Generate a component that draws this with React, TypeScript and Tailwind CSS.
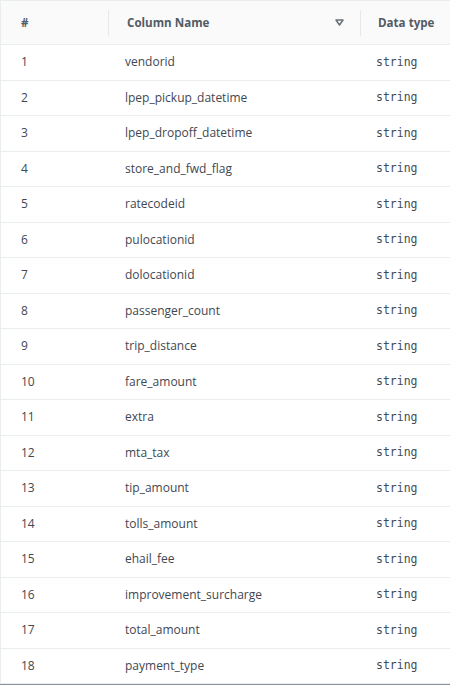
const columns = [
  "vendorid",
  "lpep_pickup_datetime",
  "lpep_dropoff_datetime",
  "store_and_fwd_flag",
  "ratecodeid",
  "pulocationid",
  "dolocationid",
  "passenger_count",
  "trip_distance",
  "fare_amount",
  "extra",
  "mta_tax",
  "tip_amount",
  "tolls_amount",
  "ehail_fee",
  "improvement_surcharge",
  "total_amount",
  "payment_type",
]

export default function App() {
  return (
    <div className="h-[685px] w-[450px] overflow-hidden bg-white font-['Open_Sans',sans-serif]">
      <div className="border-l border-t border-[#eaeded]">
        {/* header */}
        <div className="flex h-[44px] items-center border-b border-[#eaeded] bg-[#fafafa] text-[11.6px] font-bold text-[#545b64]">
          <div className="flex w-[107px] items-center pl-[20px]">#</div>
          <div className="h-[26px] w-px bg-[#e6e8ea]" />
          <div className="flex w-[251px] items-center justify-between pl-[18px] pr-[16px]">
            <span>Column Name</span>
            <svg width="9" height="7" viewBox="0 0 9 7" className="text-[#687078]">
              <path d="M1 1h7L4.5 6z" fill="none" stroke="currentColor" strokeWidth="1.5" strokeLinejoin="round" />
            </svg>
          </div>
          <div className="h-[26px] w-px bg-[#e6e8ea]" />
          <div className="pl-[17px]">Data type</div>
        </div>

        {/* rows */}
        {columns.map((name, i) => (
          <div
            key={name}
            className="flex h-[35.5px] items-center border-b border-[#eaeded] text-[12px] text-[#3f4752]"
          >
            <div className="w-[105px] pl-[20px]">{i + 1}</div>
            <div className="w-[252px] pl-[19px]">{name}</div>
            <div className="pl-[18px] font-['DejaVu_Sans_Mono',monospace] text-[11.5px] text-[#444b54]">
              string
            </div>
          </div>
        ))}
      </div>
      <div className="h-[2px] w-full bg-[#8a9299]" />
    </div>
  )
}
